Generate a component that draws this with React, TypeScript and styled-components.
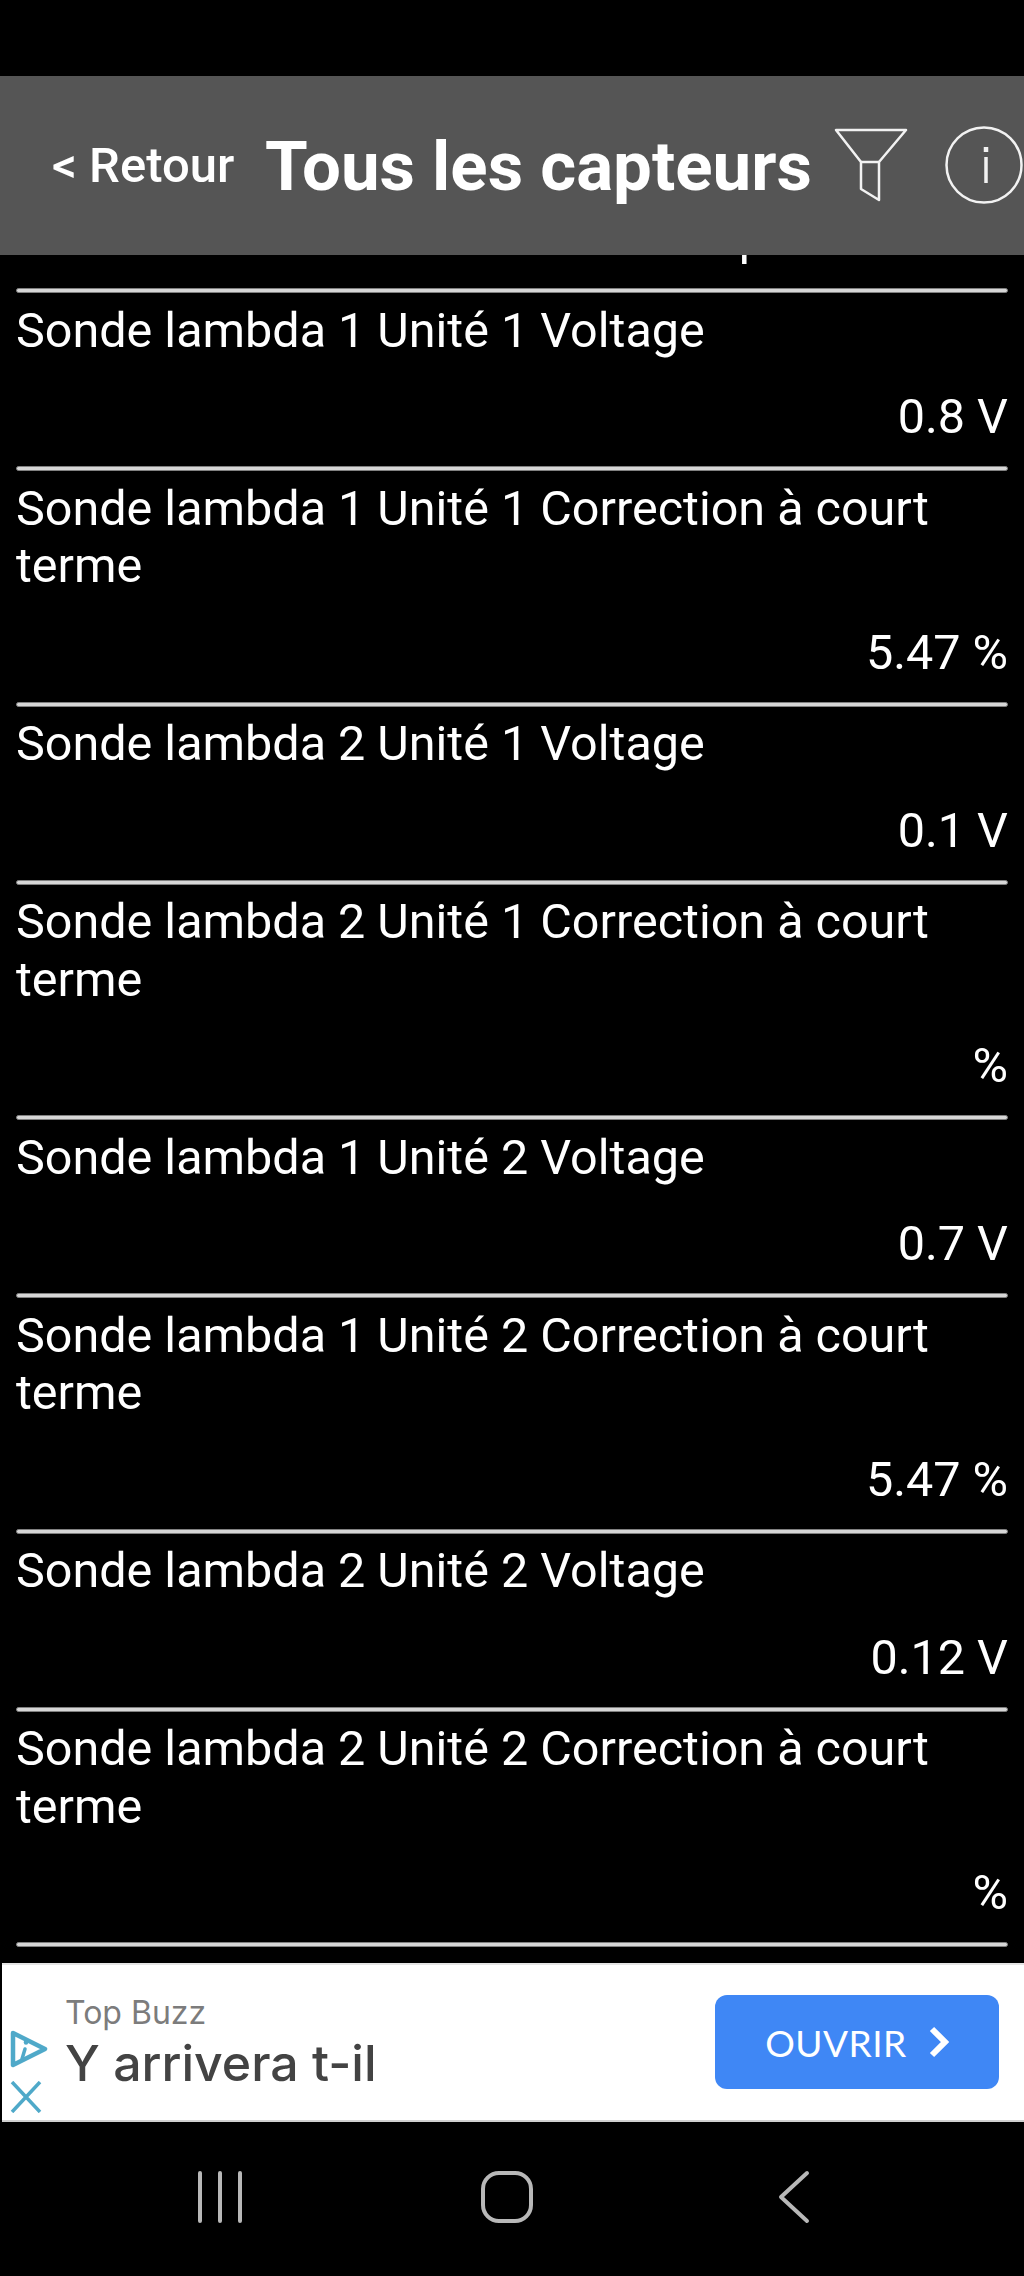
import React from 'react'
import styled, { createGlobalStyle } from 'styled-components'

const GlobalStyle = createGlobalStyle`
    html, body {
        margin: 0;
        padding: 0;
        background: #000;
    }
`

const Page = styled.div`
    width: 1024px;
    height: 2276px;
    display: flex;
    flex-direction: column;
    overflow: hidden;
    background: #000;
    color: #fff;
    font-family: 'Roboto', 'Liberation Sans', sans-serif;
`

const StatusBar = styled.div`
    height: 76px;
    flex: none;
`

const Header = styled.header`
    height: 179px;
    flex: none;
    display: flex;
    align-items: center;
    background: #555555;
    position: relative;
    z-index: 1;
`

const BackLink = styled.span`
    margin-left: 52px;
    width: 213px;
    flex: none;
    font-size: 49px;
    font-weight: 500;
    white-space: nowrap;
`

const Title = styled.h1`
    margin: 2px 0 0;
    width: 571px;
    flex: none;
    font-size: 69px;
    font-weight: 700;
    white-space: nowrap;
`

const FilterIcon = styled.svg`
    width: 74px;
    height: 76px;
    flex: none;
    margin-top: -2px;
    margin-left: -2px;
`

const InfoIcon = styled.svg`
    width: 80px;
    height: 82px;
    flex: none;
    margin-left: 37px;
    margin-top: -2px;
`

const Viewport = styled.main`
    flex: 1;
    min-height: 0;
    overflow: hidden;
`

const List = styled.div`
    display: flow-root;
    margin-top: -75px;
    padding: 0 16px;
`

const Label = styled.div`
    padding-top: 8.5px;
    font-size: 48.5px;
    line-height: 57.5px;
`

const Value = styled.div`
    margin-top: 29px;
    margin-bottom: 20.5px;
    font-size: 48.5px;
    line-height: 57.5px;
    text-align: right;
    white-space: nowrap;
`

// row scrolled away under the header, only its last pixels show
const ScrolledValue = styled(Value)`
    margin-bottom: 21.5px;
    padding-right: 58px;
`

const Rule = styled.hr`
    height: 5px;
    margin: 0;
    box-sizing: border-box;
    border: 1px solid #808080;
    border-radius: 3px;
    background: #d6d6d6;
`

const Ad = styled.aside`
    height: 159px;
    flex: none;
    box-sizing: border-box;
    margin-left: 2px;
    display: flex;
    align-items: center;
    background: #fff;
    border-top: 2px solid #e4e4e4;
    border-bottom: 2px solid #d0d0d0;
    position: relative;
    z-index: 1;
`

const AdIcons = styled.div`
    width: 63px;
    flex: none;
    display: flex;
    flex-direction: column;
    align-items: flex-start;
    gap: 12px;
    margin-top: 57px;
    padding-left: 7px;
    box-sizing: border-box;
`

const AdText = styled.div`
    flex: 1;
    font-family: 'Inter', 'Liberation Sans', sans-serif;
`

const AdSource = styled.div`
    font-size: 32px;
    line-height: 40px;
    color: #7c7c7c;
`

const AdHeadline = styled.div`
    font-size: 50px;
    font-weight: 500;
    line-height: 60px;
    color: #434343;
`

const OpenButton = styled.div`
    width: 284px;
    height: 94px;
    flex: none;
    margin-right: 25px;
    margin-top: -1px;
    display: flex;
    align-items: center;
    justify-content: center;
    gap: 22px;
    border-radius: 12px;
    background: #3f87f5;
    color: #fff;
    font-family: 'Lato', 'Liberation Sans', sans-serif;
    font-size: 37px;
    letter-spacing: 0.5px;
`

const NavBar = styled.nav`
    height: 154px;
    flex: none;
    display: grid;
    grid-template-columns: repeat(3, 287px);
    justify-content: center;
    justify-items: center;
    align-items: center;
    margin-right: 10px;
`

const NavIcon = styled.svg`
    width: 60px;
    height: 60px;
    margin-top: -4px;
    fill: none;
    stroke: #b8b8b8;
    stroke-width: 4;
    stroke-linecap: round;
    stroke-linejoin: round;
`

type Reading = { label: string; value: string }

const readings: Reading[] = [
    { label: 'Sonde lambda 1 Unité 1 Voltage', value: '0.8 V' },
    { label: 'Sonde lambda 1 Unité 1 Correction à court terme', value: '5.47 %' },
    { label: 'Sonde lambda 2 Unité 1 Voltage', value: '0.1 V' },
    { label: 'Sonde lambda 2 Unité 1 Correction à court terme', value: '%' },
    { label: 'Sonde lambda 1 Unité 2 Voltage', value: '0.7 V' },
    { label: 'Sonde lambda 1 Unité 2 Correction à court terme', value: '5.47 %' },
    { label: 'Sonde lambda 2 Unité 2 Voltage', value: '0.12 V' },
    { label: 'Sonde lambda 2 Unité 2 Correction à court terme', value: '%' },
]

export default function App() {
    return (
        <Page>
            <GlobalStyle />
            <StatusBar />
            <Header>
                <BackLink>&lt; Retour</BackLink>
                <Title>Tous les capteurs</Title>
                <FilterIcon viewBox="0 0 74 76" fill="none" stroke="#f2f2f2" strokeWidth="2.5" strokeLinejoin="round">
                    <path d="M2 3H72L45 35V73L27 62V35Z" />
                    <path d="M27 35H45" />
                </FilterIcon>
                <InfoIcon viewBox="0 0 80 82" fill="none" stroke="#f2f2f2" strokeWidth="2.5">
                    <circle cx="39" cy="41" r="37.5" />
                    <path d="M41 23V28" strokeWidth="4.5" />
                    <path d="M41 33V59" strokeWidth="3.5" />
                </InfoIcon>
            </Header>
            <Viewport>
                <List>
                    <ScrolledValue>Tension de sortie du capteur aval</ScrolledValue>
                    <Rule />
                    {readings.map(reading => (
                        <React.Fragment key={reading.label}>
                            <Label>{reading.label}</Label>
                            <Value>{reading.value}</Value>
                            <Rule />
                        </React.Fragment>
                    ))}
                    <Label>Sonde lambda 3 Unité 1 Voltage</Label>
                </List>
            </Viewport>
            <Ad>
                <AdIcons>
                    <svg width="39" height="40" viewBox="0 0 39 40" fill="none" stroke="#4fa9c9" strokeWidth="4.5" strokeLinejoin="round" strokeLinecap="round">
                        <path d="M4 4L36 20L4 36Z" />
                        <path d="M13 30L16 20" strokeWidth="3.5" />
                        <path d="M17 13V13.5" />
                    </svg>
                    <svg width="34" height="32" viewBox="0 0 34 32" fill="none" stroke="#4fa9c9" strokeWidth="3.5">
                        <path d="M3 1L31 31M31 1L3 31" />
                    </svg>
                </AdIcons>
                <AdText>
                    <AdSource>Top Buzz</AdSource>
                    <AdHeadline>Y arrivera t-il</AdHeadline>
                </AdText>
                <OpenButton>
                    OUVRIR
                    <svg width="20" height="32" viewBox="0 0 20 32" fill="none" stroke="#fff" strokeWidth="6">
                        <path d="M3 3L16 16L3 29" />
                    </svg>
                </OpenButton>
            </Ad>
            <NavBar>
                <NavIcon viewBox="0 0 60 60">
                    <path d="M10 6V54M30 6V54M50 6V54" />
                </NavIcon>
                <NavIcon viewBox="0 0 60 60">
                    <rect x="6" y="6" width="48" height="48" rx="16" />
                </NavIcon>
                <NavIcon viewBox="0 0 60 60">
                    <path d="M43 6L17 30L43 54" />
                </NavIcon>
            </NavBar>
        </Page>
    )
}
